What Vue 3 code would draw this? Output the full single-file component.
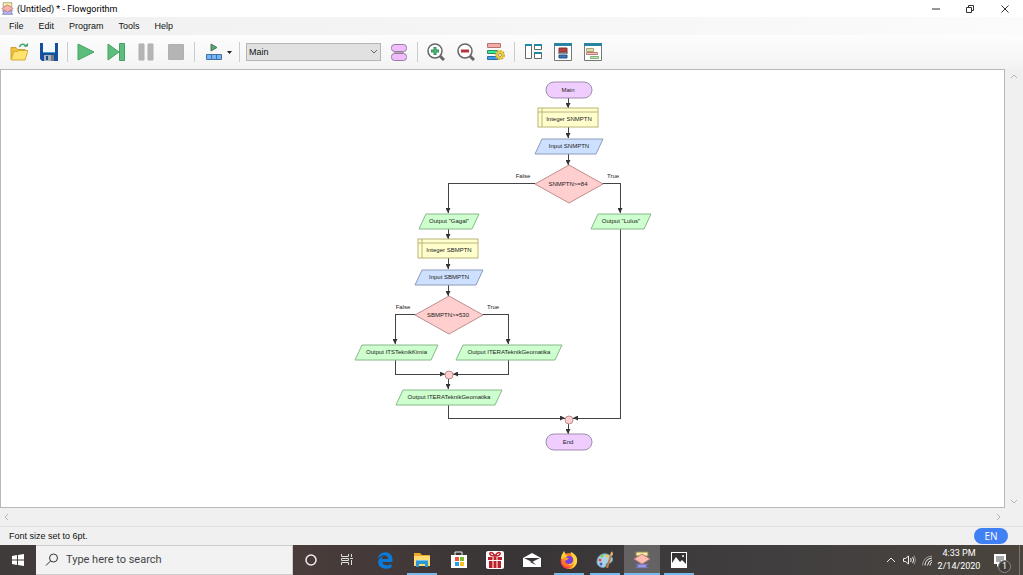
<script setup>
import { ref } from 'vue'

const menus = ['File', 'Edit', 'Program', 'Tools', 'Help']
const current = ref('Main')
const query = ref('')

const slanted = (left, right, top, skew = 7) =>
  `${left + skew},${top} ${right},${top} ${right - skew},${top + 15} ${left},${top + 15}`

const terminals = [
  { x: 546, y: 82, label: 'Main' },
  { x: 546, y: 434, label: 'End' }
]
const declarations = [
  { x: 538, y: 108, label: 'Integer SNMPTN' },
  { x: 418, y: 239, label: 'Integer SBMPTN' }
]
const slants = [
  { kind: 'input', left: 535, right: 603, top: 139, label: 'Input SNMPTN' },
  { kind: 'output', left: 591, right: 651, top: 214, label: 'Output "Lulus"' },
  { kind: 'output', left: 419, right: 479, top: 214, label: 'Output "Gagal"' },
  { kind: 'input', left: 415, right: 483, top: 270, label: 'Input SBMPTN' },
  { kind: 'output', left: 355, right: 438, top: 345, label: 'Output ITSTeknikKimia' },
  { kind: 'output', left: 456, right: 562, top: 345, label: 'Output ITERATeknikGeomatika' },
  { kind: 'output', left: 396, right: 502, top: 390, label: 'Output ITERATeknikGeomatika' }
]
const decisions = [
  { x: 569, y: 184, label: 'SNMPTN>=84' },
  { x: 449, y: 315, label: 'SBMPTN>=530' }
]
const branches = [
  { x: 523, y: 178, label: 'False' },
  { x: 613, y: 178, label: 'True' },
  { x: 403, y: 309, label: 'False' },
  { x: 493, y: 309, label: 'True' }
]
const joins = [{ x: 449, y: 375 }, { x: 569, y: 420 }]
const edges = [
  'M568 98V108', 'M568 127V138', 'M568 154V165',
  'M535 183H448V213', 'M602 183H620V213',
  'M448 229V239', 'M448 258V269', 'M448 285V296',
  'M416 314H395V344', 'M482 314H508V344',
  'M395 360V374H445', 'M508 360V374H453', 'M448 379V389',
  'M448 405V418H565', 'M620 229V418H573', 'M568 424V434'
]
</script>

<template>
  <div class="desktop">
    <header class="titlebar">
      <svg class="app-icon" viewBox="0 0 18 18" aria-hidden="true">
        <path d="M3 1h12v5H3z" fill="#fff3a8" stroke="#8d8970" />
        <path d="M2 12h14l-2 2 2 3H2l2-3z" fill="#b7b7fa" stroke="#6d6d99" />
        <path d="M9 4l8 5-8 5-8-5z" fill="#ffb0a8" stroke="#a87878" />
      </svg>
      <h1>(Untitled) * - Flowgorithm</h1>
      <div class="window-controls">
        <button aria-label="Minimize"><svg viewBox="0 0 10 10"><path d="M1 5h8" /></svg></button>
        <button aria-label="Restore"><svg viewBox="0 0 10 10"><path d="M1.500 3.500h5v5h-5zM3.500 3V1.500h5v5H7" /></svg></button>
        <button aria-label="Close"><svg viewBox="0 0 10 10"><path d="M1.500 1.500l7 7m0-7l-7 7" /></svg></button>
      </div>
    </header>

    <nav class="menubar">
      <button v-for="menu in menus" :key="menu">{{ menu }}</button>
    </nav>

    <div class="toolbar" role="toolbar" aria-label="Flowchart tools">
      <button aria-label="Open">
        <svg viewBox="0 0 18 18">
          <path d="M1 16V4.500h5l1.500 2H15V9" fill="#ecc23d" stroke="#d0a32b" />
          <path d="M1 17l3-8.500h4l1-1h9L15 17z" fill="#ffe36e" stroke="#d9ab32" />
          <path d="M9.500 4C11 0 15 .5 16 4" fill="none" stroke="#48a76d" stroke-width="1.500" />
          <path d="M13.500 3.500h4.500V0z" fill="#48a76d" />
        </svg>
      </button>
      <button aria-label="Save">
        <svg viewBox="0 0 18 18">
          <path d="M0 0h18v18H2l-2-2z" fill="#174f9c" />
          <path d="M3 0h12v9H3z" fill="#f6fafd" /><path d="M3 9h12v1H3z" fill="#3ba0d8" />
          <path d="M4 12h10v6H4z" fill="#aab5bb" /><path d="M6 13h2v4H6z" fill="#164786" /><path d="M11 12h3v6h-3z" fill="#717d84" />
        </svg>
      </button>
      <span class="separator"></span>
      <button aria-label="Run"><svg viewBox="0 0 18 18"><path d="M1 1l16 8-16 8z" fill="#5dbd7d" stroke="#44a364" /></svg></button>
      <button aria-label="Step">
        <svg viewBox="0 0 18 18"><path d="M1 1l11 8-11 8z" fill="#5dbd7d" stroke="#44a364" /><path d="M12.500 .5h5v17h-5z" fill="#5dbd7d" stroke="#44a364" /></svg>
      </button>
      <button aria-label="Pause"><svg viewBox="0 0 18 18"><path d="M2 1h5v16H2zM11 1h5v16h-5z" fill="#b5b5b5" stroke="#b0b0b0" /></svg></button>
      <button aria-label="Stop"><svg viewBox="0 0 18 18"><path d="M1.500 1.500h15v15h-15z" fill="#b5b5b5" stroke="#b0b0b0" /></svg></button>
      <span class="separator"></span>
      <button class="with-caret" aria-label="Speed">
        <svg viewBox="0 0 18 18">
          <path d="M6 1l6 3.500L6 8z" fill="#4dae6d" stroke="#55715f" />
          <path d="M1.500 11.500h15v5h-15zM6.500 11.500v5M11.500 11.500v5" fill="#75b5fb" stroke="#466f9f" />
        </svg>
        <svg class="caret" viewBox="0 0 5 5"><path d="M0 1h5L2.500 4z" fill="#222" /></svg>
      </button>
      <span class="separator"></span>
      <div class="picker">
        <select v-model="current" aria-label="Function"><option>Main</option></select>
        <svg viewBox="0 0 8 8" aria-hidden="true"><path d="M1 2l3 3 3-3" fill="none" stroke="#666" /></svg>
      </div>
      <button aria-label="Manage functions">
        <svg viewBox="0 0 18 18">
          <path d="M4 7h10v4H4z" fill="#aaa" />
          <rect x="1.500" y="1.500" width="15" height="7" rx="3" fill="#f0bdff" stroke="#987aa3" />
          <rect x="1.500" y="10.500" width="15" height="7" rx="3" fill="#f0bdff" stroke="#987aa3" />
        </svg>
      </button>
      <span class="separator"></span>
      <button aria-label="Zoom in">
        <svg viewBox="0 0 18 18">
          <path d="M12 12l5 5" stroke="#666" stroke-width="3" /><circle cx="8" cy="8" r="7" fill="#fff" stroke="#666" stroke-width="1.500" />
          <path d="M8 4v8M4 8h8" stroke="#34945a" stroke-width="3" /><path d="M8 5v6M5 8h6" stroke="#55bd79" />
        </svg>
      </button>
      <button aria-label="Zoom out">
        <svg viewBox="0 0 18 18">
          <path d="M12 12l5 5" stroke="#666" stroke-width="3" /><circle cx="8" cy="8" r="7" fill="#fff" stroke="#666" stroke-width="1.500" />
          <path d="M4 8h8" stroke="#b8323d" stroke-width="3" />
        </svg>
      </button>
      <button aria-label="Chart style">
        <svg viewBox="0 0 18 18">
          <path d="M.5 .5h13v4H.5z" fill="#f5aaa5" stroke="#b17773" /><path d="M.5 7.500h10v3H.5z" fill="#36e994" stroke="#35895f" /><path d="M.5 13.500h10v3H.5z" fill="#379df2" stroke="#2f6d9f" />
          <circle cx="13" cy="12" r="4" fill="#ffdf4a" stroke="#c9a52d" stroke-width="2" stroke-dasharray="2 1" /><circle cx="13" cy="12" r="3" fill="#ffe565" stroke="#e8c83c" stroke-width="1.500" /><circle cx="13" cy="12" r="1.500" fill="#fff" stroke="#a99542" />
        </svg>
      </button>
      <span class="separator"></span>
      <button aria-label="Layout windows">
        <svg viewBox="0 0 18 18">
          <path d="M1.500 2.500h6v13h-6zM10.500 2.500h7v4h-7zM10.500 10.500h7v5h-7z" fill="#fff" stroke="#666" />
          <path d="M1 1h7v2H1zM10 1h8v2h-8zM10 9h8v2h-8z" fill="#2388a4" />
        </svg>
      </button>
      <button aria-label="Source code viewer">
        <svg viewBox="0 0 18 18">
          <path d="M.5 .5h17v17H.5z" fill="#fff" stroke="#777" /><path d="M0 0h18v3H0z" fill="#2b83a2" />
          <path d="M5 5h8v4H5z" fill="#b83f40" stroke="#813232" /><path d="M4 10h10" stroke="#333" /><path d="M5 12h8v3H5z" fill="#3a78bc" stroke="#245386" />
        </svg>
      </button>
      <button aria-label="Variable watch">
        <svg viewBox="0 0 18 18">
          <path d="M.5 .5h17v17H.5z" fill="#fff" stroke="#777" /><path d="M0 0h18v3H0z" fill="#2b83a2" />
          <path d="M2.500 5.500h7v3h-7z" fill="#e3ddb0" stroke="#aaa474" /><path d="M2.500 9.500h11v2h-11z" fill="#f6c1b8" stroke="#bd8077" /><path d="M6.500 13.500h8v2h-8z" fill="#b9e7b5" stroke="#83af7d" />
        </svg>
      </button>
    </div>

    <main class="workspace">
      <div class="canvas">
        <svg class="chart" viewBox="353 70 299 390" role="img" aria-label="Flowchart of Main">
          <defs>
            <marker id="arrow" viewBox="0 0 5 5" refX="5" refY="2.500" markerWidth="5" markerHeight="5" orient="auto"><path d="M0 0l5 2.500L0 5z" fill="#333" /></marker>
          </defs>
          <path v-for="edge in edges" :key="edge" class="edge" :d="edge" marker-end="url(#arrow)" />
          <g v-for="item in terminals" :key="item.label">
            <rect class="terminal" :x="item.x" :y="item.y" width="46" height="16" rx="8" />
            <text :x="item.x + 22" :y="item.y + 10">{{ item.label }}</text>
          </g>
          <g v-for="item in declarations" :key="item.label">
            <rect class="declaration" :x="item.x" :y="item.y" width="60" height="19" />
            <path class="declaration" :d="`M${item.x + 4} ${item.y}v19M${item.x} ${item.y + 4}h60`" />
            <text :x="item.x + 31" :y="item.y + 13">{{ item.label }}</text>
          </g>
          <g v-for="item in slants" :key="`${item.left}-${item.top}`">
            <polygon :class="item.kind" :points="slanted(item.left, item.right, item.top)" />
            <text :x="(item.left + item.right) / 2" :y="item.top + 9">{{ item.label }}</text>
          </g>
          <g v-for="item in decisions" :key="item.label">
            <path class="decision" :d="`M${item.x} ${item.y - 19}l34 19-34 19-34-19z`" />
            <text :x="item.x - 1" :y="item.y + 2">{{ item.label }}</text>
          </g>
          <text v-for="item in branches" :key="`${item.x}-${item.y}`" :x="item.x" :y="item.y">{{ item.label }}</text>
          <circle v-for="item in joins" :key="item.x" class="decision" :cx="item.x" :cy="item.y" r="4" />
        </svg>
      </div>
      <div class="vertical-scroll">
        <button aria-label="Scroll up"><svg viewBox="0 0 8 8"><path d="M1 6l3-3 3 3" /></svg></button>
        <button aria-label="Scroll down"><svg viewBox="0 0 8 8"><path d="M1 2l3 3 3-3" /></svg></button>
      </div>
      <div class="horizontal-scroll">
        <button aria-label="Scroll left"><svg viewBox="0 0 8 8"><path d="M6 1L3 4l3 3" /></svg></button>
        <button aria-label="Scroll right"><svg viewBox="0 0 8 8"><path d="M2 1l3 3-3 3" /></svg></button>
      </div>
    </main>

    <footer class="statusbar"><span>Font size set to 6pt.</span><button class="language">EN</button></footer>

    <div class="taskbar">
      <button class="start" aria-label="Start"><svg viewBox="0 0 12 12"><path d="M0 2l5-1v4.500H0zM6 1l6-1v5.500H6zM0 6.500h5V11l-5-1zM6 6.500h6V12l-6-1z" fill="#fff" /></svg></button>
      <label class="search">
        <svg viewBox="0 0 14 14" aria-hidden="true"><circle cx="8.500" cy="5" r="4" /><path d="M5.500 8L1 12.500" /></svg>
        <input v-model="query" type="text" placeholder="Type here to search" aria-label="Type here to search" />
      </label>
      <div class="shell">
        <button aria-label="Cortana"><svg viewBox="0 0 20 20"><circle cx="10" cy="10" r="5" fill="none" stroke="#eee" stroke-width="1.500" /></svg></button>
        <button aria-label="Task view"><svg viewBox="0 0 20 20"><path d="M4.500 4v2.500h7V4M4.500 15v-2.500h7V15M4.500 8.500h7v2h-7zM14.500 4v3M14.500 10v5M13 8.500h3" fill="none" stroke="#ddd" /></svg></button>
      </div>
      <div class="apps">
        <button aria-label="Edge"><svg viewBox="0 0 20 20"><path d="M2.500 9C4 0 17 0 17.500 9v3h-10c.5 4 5.500 4 9 2v3.500c-7 3.500-15-.5-13-7 .7-2.500 3-4 5-4.500-1.500 1-1.500 2.500-1.500 3h6C13 4 6 4 2.500 9z" fill="#0b7bd7" /></svg></button>
        <button class="running" aria-label="File Explorer"><svg viewBox="0 0 20 20"><path d="M2 3h6l2 2h8v11H2z" fill="#eea928" /><path d="M2 6h16v10H2z" fill="#ffdb76" /><path d="M4 10h12v7h-3v-3H7v3H4z" fill="#2b98d5" /><path d="M4 10h12v1H4z" fill="#73c1e8" /></svg></button>
        <button aria-label="Store"><svg viewBox="0 0 20 20"><path d="M6 6V2h7v4" fill="none" stroke="#eee" /><path d="M2 5h16v13H2z" fill="#fff" /><path d="M6 7h4v4H6z" fill="#ef5535" /><path d="M11 7h4v4h-4z" fill="#7fb82f" /><path d="M6 12h4v4H6z" fill="#21a4df" /><path d="M11 12h4v4h-4z" fill="#fbbd20" /></svg></button>
        <button aria-label="Gifts"><svg viewBox="0 0 20 20"><rect x="1" y="1" width="18" height="18" rx="2" fill="#fff" /><path d="M3 7h14v3H3zM4 11h12v7H4z" fill="#bd202b" /><path d="M9.500 6C4 6 4 2.500 6 2.500S10 6 10 6s2-3.500 4-3.500S16 6 10.500 6" fill="none" stroke="#bd202b" stroke-width="1.500" /><path d="M8 7v11M12 7v11" stroke="#fff" /></svg></button>
        <button aria-label="Mail"><svg viewBox="0 0 20 20"><path d="M1 8l9-5 9 5v9H1z" fill="#fff" /><path d="M2 8h16l-8 4z" fill="#393536" /><path d="M10 11l4 4-6-3z" fill="#393536" /></svg></button>
        <button class="running" aria-label="Firefox"><svg viewBox="0 0 20 20"><circle cx="10" cy="11" r="8" fill="#ff7727" /><path d="M2 9C2 5 4 3 5 1l2 4 4 2-3 3 2 5c4 1 6-3 4-7-1-2-3-3-2-6 4 2 7 5 6 10-1 4-4 7-8 7 5-2 6-7 3-11" fill="#ffd13b" /><path d="M2 8c0 8 4 9 9 9-5 4-11-2-9-9z" fill="#ff384e" /><circle cx="10" cy="10" r="4" fill="#743ee2" /><path d="M4 7l6 1-2 2-3 1z" fill="#ff9d28" /></svg></button>
        <button class="running" aria-label="Paint"><svg viewBox="0 0 20 20"><path d="M2 12C2 5 9 2 14 5c5 2 4 7 1 8-3 0-4 0-4 3-2 3-9 1-9-4z" fill="#a9d4e7" stroke="#6ba4c1" /><circle cx="5" cy="10" r="1.500" fill="#e7474c" /><circle cx="7" cy="6" r="1.500" fill="#7acb53" /><circle cx="12" cy="6" r="1.500" fill="#f4c53d" /><circle cx="6" cy="14" r="1.500" fill="#4766bc" /><path d="M17 2L12 18" stroke="#bd7c42" stroke-width="2" /><path d="M17 1l-2 5 3-1z" fill="#eebe78" /></svg></button>
        <button class="running active" aria-label="Flowgorithm"><svg viewBox="0 0 20 20"><path d="M4 2h12v4H4z" fill="#f9eda0" stroke="#8d8559" /><path d="M3 14h14l-3 2 3 2H3l3-2z" fill="#9898e8" stroke="#65658f" /><path d="M10 4l8 5-8 5-8-5z" fill="#ffbbb1" stroke="#b98078" /></svg></button>
        <button class="running" aria-label="Photos"><svg viewBox="0 0 20 20"><path d="M2 2h16v16H2z" fill="#fff" /><path d="M3 3h14v11l-4-4-2 2-4-5-4 6z" fill="#353233" /><circle cx="14" cy="6" r="1" fill="#fff" /></svg></button>
      </div>
      <div class="tray">
        <button aria-label="Show hidden icons"><svg viewBox="0 0 14 14"><path d="M3 9l4-4 4 4" /></svg></button>
        <button aria-label="Volume"><svg viewBox="0 0 14 14"><path d="M1.500 5.500h2L6.500 3v8l-3-2.500h-2zM8.500 5q1.500 2 0 4M10.500 4q2.500 3 0 6" /><path d="M12 2.500q3 4.500 0 9" class="faint" /></svg></button>
        <button aria-label="Network"><svg viewBox="0 0 14 14"><path d="M10 12.500Q10 10 12 9M7.500 12.500Q8 8 12 7M5 12.500Q5 6 12 5" /><path d="M2.500 12.500Q3 4 12 3" class="faint" /></svg></button>
        <time datetime="2020-02-14T16:33">4:33 PM<br />2/14/2020</time>
        <button class="notifications" aria-label="Notifications, 1 new">
          <svg viewBox="0 0 16 16"><path d="M1 2h12v10H7l-3 3v-3H1z" class="bubble" /><path d="M3 5h8M3 7h8M3 9h5" class="rule" /></svg>
          <span class="badge">1</span>
        </button>
      </div>
    </div>
  </div>
</template>

<style>
body { margin: 0; }
</style>

<style scoped>
* { box-sizing: border-box; }
.desktop { min-height: 100vh; display: flex; flex-direction: column; background: #f0f0f0; color: #111; font: 9px/12px "Liberation Sans", Arial, sans-serif; }
button { border: 0; padding: 0; margin: 0; background: none; color: inherit; font: inherit; display: flex; align-items: center; justify-content: center; }
svg { display: block; flex: none; }

.titlebar { height: 17px; display: flex; align-items: center; background: #fff; padding-left: 1px; }
.app-icon { width: 13px; height: 13px; }
h1 { margin: 0 0 0 3px; font: 9px/16px Roboto, sans-serif; color: #000; }
.window-controls { margin-left: auto; display: flex; }
.window-controls button { width: 34px; height: 16px; }
.window-controls button:last-child { width: 36px; }
.window-controls svg { width: 10px; height: 10px; fill: none; stroke: #333; }

.menubar { height: 18px; display: flex; align-items: center; gap: 15px; padding-left: 9px; background: linear-gradient(90deg, #f0f0f0, #fbfbfb); }
.toolbar { height: 34px; display: flex; align-items: center; padding-left: 4px; background: linear-gradient(#fdfdfd, #f3f3f3); }
.toolbar button { width: 30px; height: 26px; }
.toolbar svg { width: 18px; height: 18px; }
.toolbar .with-caret { width: 38px; gap: 4px; padding-left: 3px; }
.toolbar .caret { width: 5px; height: 5px; }
.separator { flex: none; width: 1px; height: 20px; margin: 0 3px; background: #ccc; }
.picker { position: relative; width: 135px; margin: 0 3px; }
.picker select { display: block; width: 100%; height: 18px; padding: 0 2px; border: 1px solid #b5b5b5; border-radius: 0; background: #e1e1e1; color: #111; font: inherit; appearance: none; }
.toolbar .picker svg { position: absolute; right: 3px; top: 5px; width: 8px; height: 8px; pointer-events: none; }

.workspace { flex: 1; display: grid; grid-template-columns: 1fr 18px; grid-template-rows: 1fr 18px; }
.canvas { background: #fff; border: 1px solid #b8b8b8; overflow: hidden; }
.chart { width: 299px; height: 390px; margin: 0 auto; }
.chart text { font: 6px "Liberation Sans", Arial, sans-serif; fill: #222; text-anchor: middle; }
.edge { fill: none; stroke: #444; shape-rendering: crispEdges; }
.terminal { fill: #efceff; stroke: #a08cb0; }
.declaration { fill: #ffffce; stroke: #bab476; }
.input { fill: #cee0ff; stroke: #8c9cba; }
.output { fill: #ceffce; stroke: #88b88a; }
.decision { fill: #ffcece; stroke: #c08e8e; }
.vertical-scroll { display: flex; flex-direction: column; justify-content: space-between; padding: 3px 0 2px; }
.horizontal-scroll { display: flex; justify-content: space-between; padding: 0 2px; }
.vertical-scroll button { height: 8px; }
.workspace button svg { width: 8px; height: 8px; fill: none; stroke: #b5b5b5; }

.statusbar { height: 19px; display: flex; align-items: center; justify-content: space-between; padding: 0 15px 1px 9px; border-top: 1px solid #e2e2e2; }
.language { width: 34px; height: 16px; border-radius: 8px; background: #4080f5; color: #fff; font: 10px "Open Sans", sans-serif; }

.taskbar { height: 30px; display: flex; background: linear-gradient(90deg, #403b3b, #493c3a 30%, #393536 50%, #413e40 75%, #4a443c); color: #fff; font-family: Roboto, sans-serif; }
.start { width: 36px; }
.start svg { width: 12px; height: 12px; }
.search { width: 257px; display: flex; align-items: center; gap: 7px; padding-left: 9px; background: #f2f2f2; border: 1px solid #ccc; border-left: 0; }
.search svg { width: 14px; height: 14px; fill: none; stroke: #333; }
.search input { flex: 1; min-width: 0; border: 0; padding: 0; outline: 0; background: none; color: #333; font: 11px/16px Roboto, sans-serif; }
.search input::placeholder { color: #444; opacity: 1; }
.shell { display: grid; grid-template-columns: 1fr 1fr; width: 72px; margin-right: 2px; }
.apps { display: grid; grid-template-columns: repeat(9, 1fr); width: 330px; }
.shell svg, .apps svg { width: 20px; height: 20px; }
.apps .running { background: linear-gradient(#76b9ed, #76b9ed) center bottom / 30px 2px no-repeat; }
.apps .active { background: linear-gradient(#76b9ed, #76b9ed) center bottom / 100% 2px no-repeat, #656263; }
.tray { margin-left: auto; display: flex; align-items: center; padding-right: 3px; }
.tray button { width: 18px; height: 30px; }
.tray svg { width: 14px; height: 14px; fill: none; stroke: #eee; }
.tray .faint { stroke: #999; }
.tray time { width: 46px; text-align: center; font-size: 9px; line-height: 13px; }
.tray .notifications { position: relative; width: 38px; border-right: 1px solid #777; }
.tray .notifications svg { width: 16px; height: 16px; }
.tray .bubble { fill: #fff; stroke: none; }
.tray .rule { stroke: #555; }
.badge { position: absolute; right: 8px; bottom: 2px; width: 13px; height: 13px; border: 1px solid #888; border-radius: 50%; background: #403c39; font-size: 9px; line-height: 11px; text-align: center; }
</style>
